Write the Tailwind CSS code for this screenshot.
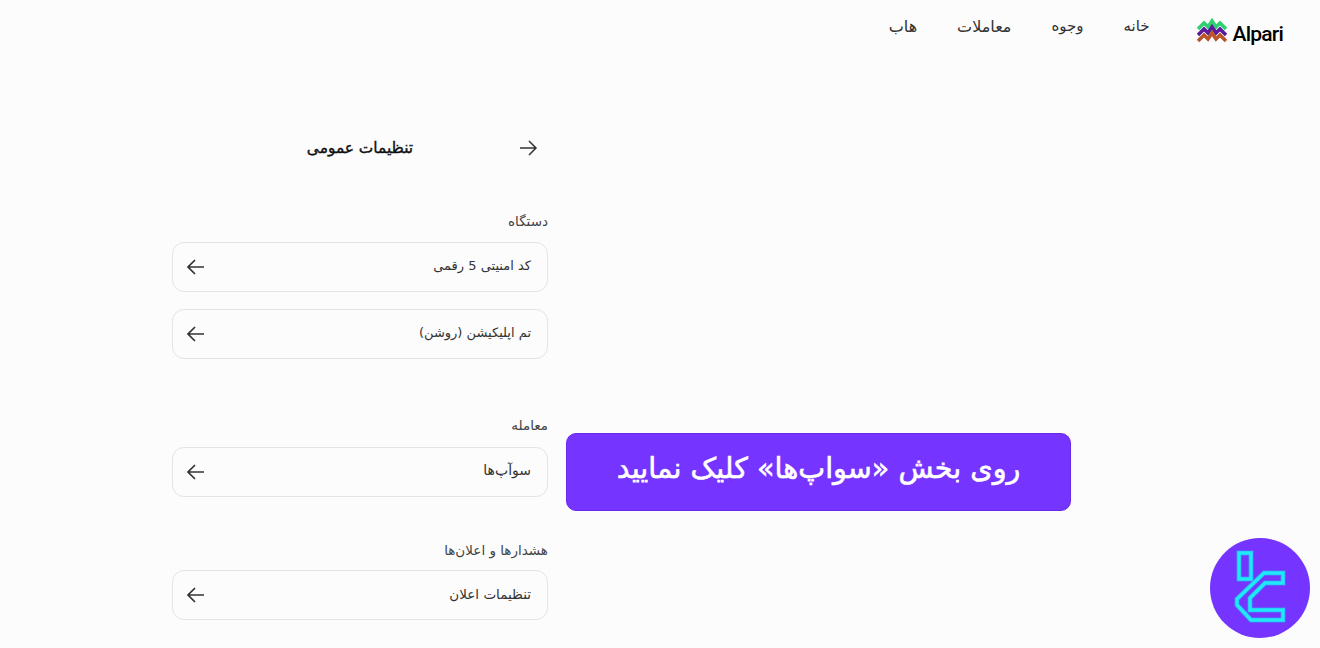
<!DOCTYPE html>
<html lang="fa" dir="rtl">
<head>
  <meta charset="UTF-8">
  <title>Alpari</title>
  <script src="https://cdn.jsdelivr.net/npm/@tailwindcss/browser@4"></script>
</head>
<body class="relative h-[648px] w-[1320px] overflow-hidden bg-[#fcfcfc] font-['DejaVu_Sans',sans-serif] text-[#333]">
  <!-- Header -->
  <header class="flex h-[54px] items-center gap-[47px] pr-[37px]">
    <div dir="ltr" class="mt-[6px] flex items-end gap-[6px]">
      <svg width="30" height="24" viewBox="0 0 30 24" fill="none" stroke-width="3.6">
        <path d="M1 11 L7 5 L11 9 L15 3 L19 9 L23 5 L29 11" stroke="#2fd06f"/>
        <path d="M1 17 L7 11 L11 15 L15 9 L19 15 L23 11 L29 17" stroke="#5a189a"/>
        <path d="M1 23 L7 17 L11 21 L15 15 L19 21 L23 17 L29 23" stroke="#b8552a"/>
      </svg>
      <span class="translate-y-[3px] font-['Roboto',sans-serif] text-[21px] leading-none font-medium tracking-[-0.8px] text-black">Alpari</span>
    </div>
    <nav class="flex gap-10 text-[15px] text-[#333]">
      <a>خانه</a>
      <a>وجوه</a>
      <a class="text-[16px]">معاملات</a>
      <a class="text-[16px]">هاب</a>
    </nav>
  </header>

  <!-- Settings column -->
  <main class="mr-[772px] w-[376px] pt-[79px]">
    <div class="relative flex h-[30px] items-center justify-center">
      <svg class="absolute right-[9px]" width="22" height="22" viewBox="0 0 22 22" fill="none" stroke="#333" stroke-width="1.5"><path d="M3 11 H19 M12 4 L19 11 L12 18"/></svg>
      <h1 class="translate-y-px text-[15.4px] text-[#111] [-webkit-text-stroke:0.4px_#111]">تنظیمات عمومی</h1>
    </div>

    <p class="mt-[48px] mb-[11px] h-5 text-[13.5px] leading-5 text-[#444]">دستگاه</p>
    <div class="flex flex-col gap-[17px]">
      <div class="flex h-[50px] items-center justify-between rounded-[12px] border border-[#e4e4e7] pr-4 pl-[11px] text-[13px] text-[#333]">
        <span class="-translate-y-px">کد امنیتی 5 رقمی</span>
        <svg width="22" height="22" viewBox="0 0 22 22" fill="none" stroke="#333" stroke-width="1.7"><path d="M20 11 H4 M11 4 L4 11 L11 18"/></svg>
      </div>
      <div class="flex h-[50px] items-center justify-between rounded-[12px] border border-[#e4e4e7] pr-4 pl-[11px] text-[13px] text-[#333]">
        <span class="-translate-y-px">تم اپلیکیشن (روشن)</span>
        <svg width="22" height="22" viewBox="0 0 22 22" fill="none" stroke="#333" stroke-width="1.7"><path d="M20 11 H4 M11 4 L4 11 L11 18"/></svg>
      </div>
    </div>

    <p class="mt-[56px] mb-[12px] h-5 text-[13.5px] leading-5 text-[#444]">معامله</p>
    <div class="flex h-[50px] items-center justify-between rounded-[12px] border border-[#e4e4e7] pr-4 pl-[11px] text-[14px] text-[#333]">
      <span class="-translate-y-0.5">سوآپ‌ها</span>
      <svg width="22" height="22" viewBox="0 0 22 22" fill="none" stroke="#333" stroke-width="1.7"><path d="M20 11 H4 M11 4 L4 11 L11 18"/></svg>
    </div>

    <p class="mt-[43px] mb-[10px] h-5 text-[13.5px] leading-5 text-[#444]">هشدارها و اعلان‌ها</p>
    <div class="flex h-[50px] items-center justify-between rounded-[12px] border border-[#e4e4e7] pr-4 pl-[11px] text-[13.5px] text-[#333]">
      <span class="-translate-y-px">تنظیمات اعلان</span>
      <svg width="22" height="22" viewBox="0 0 22 22" fill="none" stroke="#333" stroke-width="1.7"><path d="M20 11 H4 M11 4 L4 11 L11 18"/></svg>
    </div>
  </main>

  <!-- Annotation callout -->
  <div class="absolute top-[433px] left-[566px] flex h-[78px] w-[505px] items-center justify-center rounded-[10px] border border-[#6a2be8] bg-[#7534ff] pb-[8px] text-[28.6px] text-white [-webkit-text-stroke:0.6px_#fff]">
    روی بخش «سواپ‌ها» کلیک نمایید
  </div>

  <!-- Badge -->
  <div class="absolute top-[538px] left-[1210px] flex h-[100px] w-[100px] items-center justify-center rounded-full bg-[#7534ff]">
    <svg width="100" height="100" viewBox="0 0 100 100" fill="none">
      <g stroke="#3f8cf5" stroke-width="5">
        <path d="M29 15 H41 V41 H29 Z"/>
        <path d="M73 35 H54 L27 61 V67 L41 82 H73 V72 H40 V60 L55 45 H73 Z"/>
      </g>
      <g stroke="#1fe8f7" stroke-width="3.4">
        <path d="M29 15 H41 V41 H29 Z"/>
        <path d="M73 35 H54 L27 61 V67 L41 82 H73 V72 H40 V60 L55 45 H73 Z"/>
      </g>
    </svg>
  </div>
</body>
</html>
